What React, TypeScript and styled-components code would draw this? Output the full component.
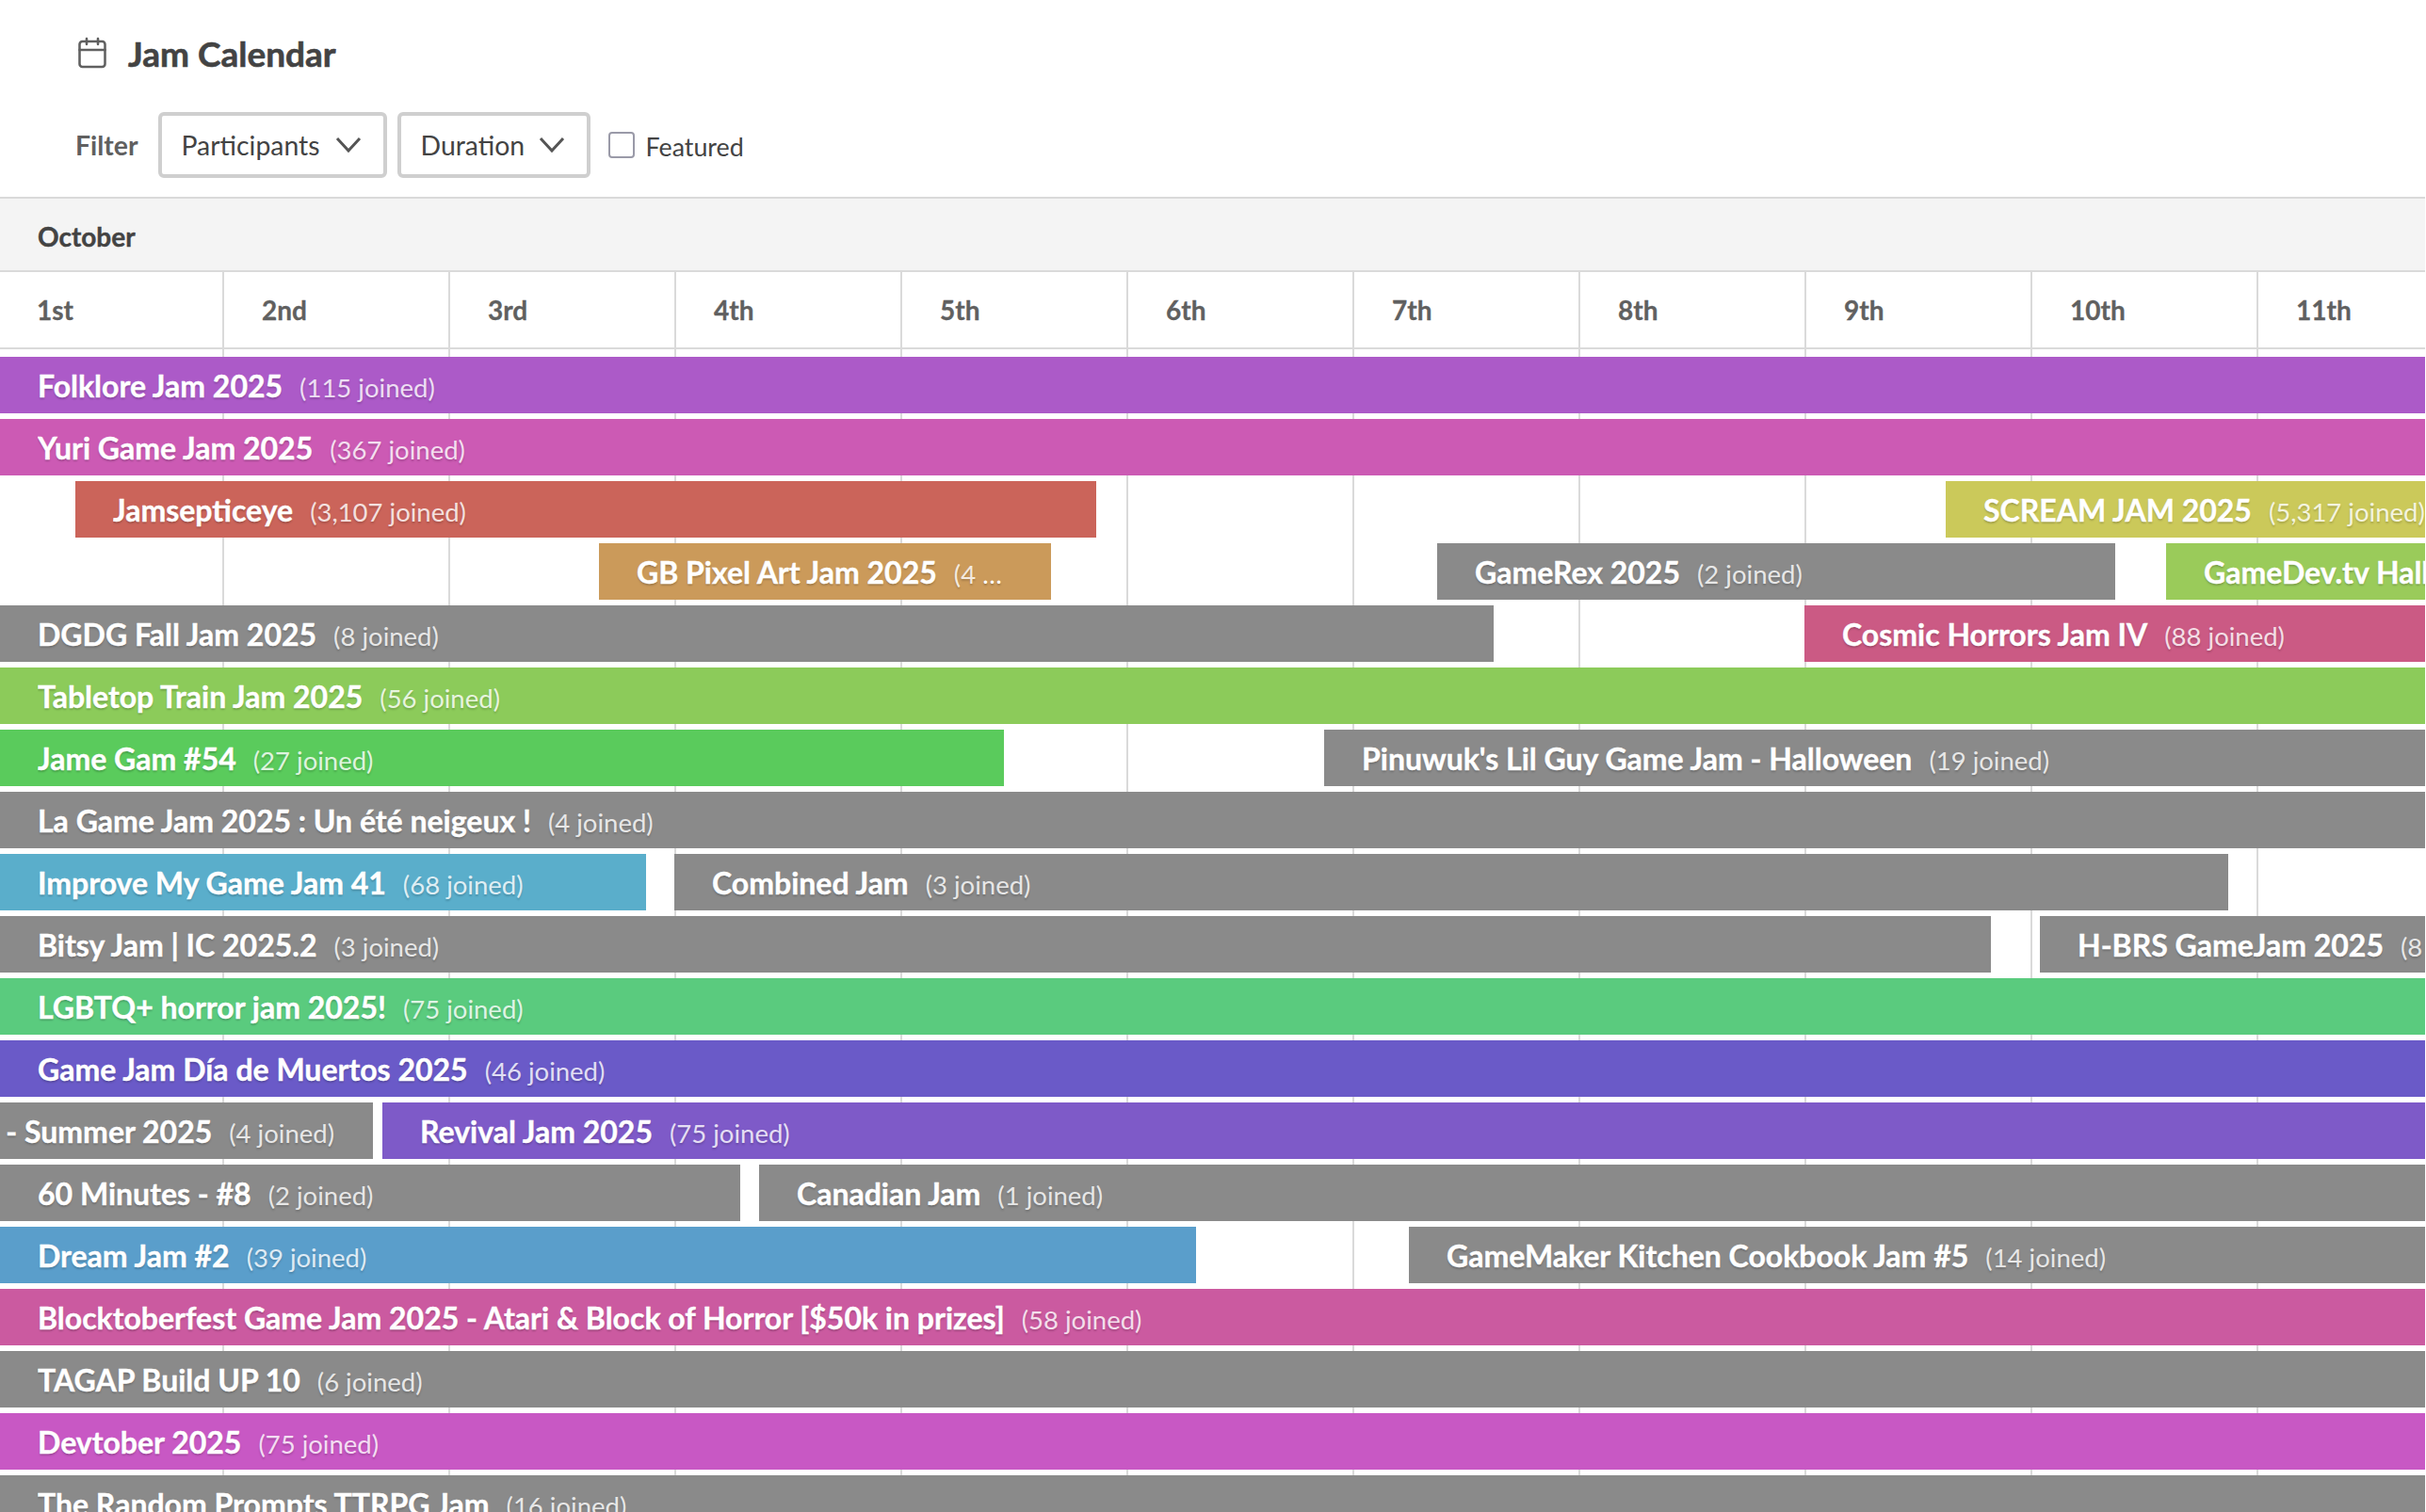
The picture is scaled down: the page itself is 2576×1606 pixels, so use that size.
import React from 'react';
import styled, { createGlobalStyle } from 'styled-components';
import { Calendar } from 'lucide-react';

const GlobalStyle = createGlobalStyle`
  html, body {
    margin: 0;
    padding: 0;
    background: #fff;
    overflow: hidden;
  }
  body {
    font-family: Lato, "Liberation Sans", sans-serif;
    color: #434343;
  }
`;

const Page = styled.main`
  width: 2575px;
  height: 1606px;
  overflow: hidden;
`;

const Header = styled.header`
  height: 209px;
  padding: 38px 80px 0 80px;
  box-sizing: border-box;
`;

const Title = styled.h1`
  display: flex;
  align-items: center;
  gap: 20px;
  margin: 0;
  height: 36px;
  font-size: 37px;
  font-weight: 700;
  -webkit-text-stroke: 0.6px #434343;
  color: #434343;
  svg {
    color: #606060;
    -webkit-text-stroke: 0;
  }
`;

const FilterRow = styled.div`
  display: flex;
  align-items: center;
  margin-top: 45px;
  height: 70px;
`;

const FilterLabel = styled.span`
  font-size: 28.4px;
  font-weight: 700;
  color: #606060;
  margin-right: 21px;
`;

const Select = styled.button<{ $width: number }>`
  display: flex;
  align-items: center;
  justify-content: space-between;
  box-sizing: border-box;
  width: ${(p) => p.$width}px;
  height: 70px;
  margin-right: 11px;
  padding: 0 22px 0 21px;
  background: #fff;
  border: 4px solid #cfcfcf;
  border-radius: 6px;
  font: 400 28.4px Lato, sans-serif;
  color: #434343;
`;

const Chevron = styled.svg`
  width: 30px;
  height: 18px;
  fill: none;
  stroke: #555;
  stroke-width: 3;
`;

const CheckLabel = styled.label`
  display: flex;
  align-items: center;
  gap: 12px;
  margin-left: 8px;
  font-size: 26.8px;
  color: #434343;
`;

const FeaturedText = styled.span`
  position: relative;
  top: 2px;
`;

const CheckBox = styled.span`
  display: block;
  width: 28px;
  height: 28px;
  box-sizing: border-box;
  border: 2px solid #9a9aa8;
  border-radius: 4px;
  background: #fff;
`;

const Month = styled.div`
  padding: 3px 0 0 40px;
  height: 73px;
  display: flex;
  align-items: center;
  background: #f4f4f4;
  border-top: 2px solid #dadada;
  border-bottom: 2px solid #dadada;
  font-size: 28px;
  font-weight: 700;
  -webkit-text-stroke: 0.4px #434343;
  color: #434343;
`;

const Days = styled.div`
  display: flex;
  height: 80px;
  border-bottom: 2px solid #dadada;
`;

const Day = styled.div<{ $first?: boolean }>`
  flex: none;
  box-sizing: border-box;
  width: ${(p) => (p.$first ? 238 : 240)}px;
  padding-left: ${(p) => (p.$first ? 39 : 40)}px;
  display: flex;
  align-items: center;
  border-right: 2px solid #dadada;
  font-size: 28px;
  font-weight: 700;
  -webkit-text-stroke: 0.3px #606060;
  color: #606060;
`;

/* day columns run behind the bars */
const Grid = styled.div`
  padding-top: 8px;
  display: flex;
  flex-direction: column;
  gap: 6px;
  background-image: linear-gradient(to right, transparent 236px, #dadada 236px, #dadada 238px, transparent 238px);
  background-size: 240px 100%;
  background-repeat: repeat-x;
`;

const Row = styled.div`
  display: flex;
  height: 60px;
  overflow: hidden;
`;

// bars with no end run on past the right edge of the page, the row clips them
const Bar = styled.div<{ $color: string; $start: number; $width: number; $flushEnd?: boolean }>`
  flex: none;
  width: ${(p) => p.$width}px;
  margin-left: ${(p) => p.$start}px;
  box-sizing: border-box;
  display: flex;
  align-items: center;
  justify-content: ${(p) => (p.$flushEnd ? 'flex-end' : 'flex-start')};
  padding: 4px ${(p) => (p.$flushEnd ? 41 : 50)}px 0 ${(p) => (p.$flushEnd ? 0 : 40)}px;
  background: ${(p) => p.$color};
  color: #fff;
  overflow: hidden;
`;

const BarText = styled.div<{ $flushEnd?: boolean }>`
  white-space: nowrap;
  overflow: ${(p) => (p.$flushEnd ? 'visible' : 'hidden')};
  text-overflow: ellipsis;
  flex: ${(p) => (p.$flushEnd ? 'none' : '0 1 auto')};
  min-width: 0;
  line-height: 56px;
  font-size: 27.5px;
  text-shadow: 0 2px 2px rgba(0, 0, 0, 0.2);
`;

const JamName = styled.span`
  font-size: 32px;
  font-weight: 700;
  -webkit-text-stroke: 0.4px #fff;
  margin-right: 18px;
`;

const Joined = styled.span`
  opacity: 0.8;
`;

const gray = '#8a8a8a';

type Jam = { name: string; joined: string; color: string; start?: number; end?: number; flushEnd?: boolean };

const rows: Jam[][] = [
  [{ name: 'Folklore Jam 2025', joined: '115', color: '#ac5ac8' }],
  [{ name: 'Yuri Game Jam 2025', joined: '367', color: '#cc5ab4' }],
  [
    { name: 'Jamsepticeye', joined: '3,107', color: '#cb645a', start: 80, end: 1164 },
    { name: 'SCREAM JAM 2025', joined: '5,317', color: '#cbc95a', start: 2066 },
  ],
  [
    { name: 'GB Pixel Art Jam 2025', joined: '4', color: '#cb9a5a', start: 636, end: 1116 },
    { name: 'GameRex 2025', joined: '2', color: gray, start: 1526, end: 2246 },
    { name: 'GameDev.tv Halloween Jam 2025', joined: '900', color: '#9acb5a', start: 2300 },
  ],
  [
    { name: 'DGDG Fall Jam 2025', joined: '8', color: gray, start: 0, end: 1586 },
    { name: 'Cosmic Horrors Jam IV', joined: '88', color: '#cb5a84', start: 1916 },
  ],
  [{ name: 'Tabletop Train Jam 2025', joined: '56', color: '#8ccb5a' }],
  [
    { name: 'Jame Gam #54', joined: '27', color: '#5acb5c', start: 0, end: 1066 },
    { name: "Pinuwuk's Lil Guy Game Jam - Halloween", joined: '19', color: gray, start: 1406 },
  ],
  [{ name: 'La Game Jam 2025 : Un été neigeux !', joined: '4', color: gray }],
  [
    { name: 'Improve My Game Jam 41', joined: '68', color: '#5aaecb', start: 0, end: 686 },
    { name: 'Combined Jam', joined: '3', color: gray, start: 716, end: 2366 },
  ],
  [
    { name: 'Bitsy Jam | IC 2025.2', joined: '3', color: gray, start: 0, end: 2114 },
    { name: 'H-BRS GameJam 2025', joined: '8', color: gray, start: 2166 },
  ],
  [{ name: 'LGBTQ+ horror jam 2025!', joined: '75', color: '#5acb7e' }],
  [{ name: 'Game Jam Día de Muertos 2025', joined: '46', color: '#6a5ac8' }],
  [
    { name: 'Game Jam - Summer 2025', joined: '4', color: gray, start: 0, end: 396, flushEnd: true },
    { name: 'Revival Jam 2025', joined: '75', color: '#7e5ac8', start: 406 },
  ],
  [
    { name: '60 Minutes - #8', joined: '2', color: gray, start: 0, end: 786 },
    { name: 'Canadian Jam', joined: '1', color: gray, start: 806 },
  ],
  [
    { name: 'Dream Jam #2', joined: '39', color: '#5a9ecb', start: 0, end: 1270 },
    { name: 'GameMaker Kitchen Cookbook Jam #5', joined: '14', color: gray, start: 1496 },
  ],
  [{ name: 'Blocktoberfest Game Jam 2025 - Atari & Block of Horror [$50k in prizes]', joined: '58', color: '#cb5aa0' }],
  [{ name: 'TAGAP Build UP 10', joined: '6', color: gray }],
  [{ name: 'Devtober 2025', joined: '75', color: '#c858c4' }],
  [{ name: 'The Random Prompts TTRPG Jam', joined: '16', color: gray }],
];

const days = ['1st', '2nd', '3rd', '4th', '5th', '6th', '7th', '8th', '9th', '10th', '11th'];

const OPEN_END = 3600;

const ChevronIcon = () => (
  <Chevron viewBox="0 0 30 18">
    <polyline points="3,2 15,15 27,2" />
  </Chevron>
);

const App: React.FC = () => {
  return (
    <Page>
      <GlobalStyle />
      <Header>
        <Title>
          <Calendar size={36} strokeWidth={1.7} />
          Jam Calendar
        </Title>
        <FilterRow>
          <FilterLabel>Filter</FilterLabel>
          <Select $width={243}>
            Participants
            <ChevronIcon />
          </Select>
          <Select $width={205}>
            Duration
            <ChevronIcon />
          </Select>
          <CheckLabel>
            <CheckBox />
            <FeaturedText>Featured</FeaturedText>
          </CheckLabel>
        </FilterRow>
      </Header>
      <Month>October</Month>
      <Days>
        {days.map((d, i) => (
          <Day key={d} $first={i === 0}>{d}</Day>
        ))}
      </Days>
      <Grid>
        {rows.map((row, i) => (
          <Row key={i}>
            {row.map((jam, j) => {
              const prevEnd = j > 0 ? row[j - 1].end ?? 0 : 0;
              const start = jam.start ?? 0;
              return (
                <Bar
                  key={jam.name}
                  $color={jam.color}
                  $start={start - prevEnd}
                  $width={(jam.end ?? OPEN_END) - start}
                  $flushEnd={jam.flushEnd}
                >
                  <BarText $flushEnd={jam.flushEnd}>
                    <JamName>{jam.name}</JamName>
                    <Joined>({jam.joined} joined)</Joined>
                  </BarText>
                </Bar>
              );
            })}
          </Row>
        ))}
      </Grid>
    </Page>
  );
};

export default App;
